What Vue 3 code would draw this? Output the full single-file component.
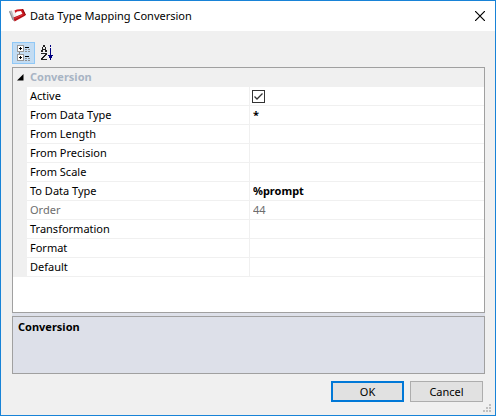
<script setup>
import { ref, reactive } from 'vue'

const expanded = ref(true)
const sortMode = ref('category')
const rows = reactive([
  { id: 'active', label: 'Active', type: 'check', value: true },
  { id: 'from-type', label: 'From Data Type', value: '*', changed: true },
  { id: 'from-length', label: 'From Length', value: '' },
  { id: 'from-precision', label: 'From Precision', value: '' },
  { id: 'from-scale', label: 'From Scale', value: '' },
  { id: 'to-type', label: 'To Data Type', value: '%prompt', changed: true },
  { id: 'order', label: 'Order', value: '44', readonly: true },
  { id: 'transformation', label: 'Transformation', value: '' },
  { id: 'format', label: 'Format', value: '' },
  { id: 'default', label: 'Default', value: '' }
])
</script>

<template>
  <main class="dialog">
    <header class="titlebar">
      <svg class="logo" width="18" height="16" viewBox="0 0 18 16" aria-hidden="true">
        <path d="M0 3L3 2.500L6 9L5 13L3 11.500Z" fill="#bcbcbf" />
        <path d="M0.500 3.500L4.500 12.500" stroke="#8c8c91" stroke-width="1" />
        <path d="M3 3L5.500 2L8 8.500L5.500 11Z" fill="#f4eeee" />
        <path d="M4.500 9.500L15.500 5L16.500 7.500L5.500 13.500Z" fill="#b80f16" />
        <path d="M5.500 10.500L15.500 6" stroke="#dd3c42" stroke-width="1" />
        <path d="M5.500 2.500L8 1.500L14 1L16.500 6.500L14 7L12 3L8 3.500L6.500 5Z" fill="#c9151d" />
        <path d="M13.500 1L16.500 7" stroke="#85090e" stroke-width="1" />
      </svg>
      <h1 class="title">Data Type Mapping Conversion</h1>
      <button class="close" type="button" aria-label="Close">
        <svg width="10" height="10" viewBox="0 0 10 10"><path d="M0 0L10 10M10 0L0 10" stroke="#000" stroke-width="1.200" /></svg>
      </button>
    </header>

    <div class="body">
      <div class="toolbar">
        <button class="tool" :class="{ on: sortMode === 'category' }" type="button" aria-label="Categorized" @click="sortMode = 'category'">
          <svg width="16" height="16" viewBox="0 0 16 16" shape-rendering="crispEdges">
            <path d="M3 7H4V9H3Z" fill="#808080" />
            <path d="M1 0H8V7H1ZM1 9H8V16H1Z" fill="#999" />
            <path d="M2 1H7V6H2ZM2 10H7V15H2Z" fill="#fff" />
            <path d="M3 3H6V4H3ZM4 2H5V5H4ZM3 12H6V13H3ZM4 11H5V14H4Z" fill="#000" />
            <path d="M9 2H13V3H9ZM9 11H13V12H9Z" fill="#000" />
            <path d="M9 4.500H15M9 6.500H15M9 13.500H15M9 15.500H15" stroke="#909090" stroke-dasharray="2 1" />
          </svg>
        </button>
        <button class="tool" :class="{ on: sortMode === 'alpha' }" type="button" aria-label="Alphabetical" @click="sortMode = 'alpha'">
          <svg width="16" height="16" viewBox="0 0 16 16" shape-rendering="crispEdges">
            <path d="M4 0H6V2H7V5H8V7H6V5H4V7H2V5H3V2H4ZM4 2V4H6V2Z" fill="#222" fill-rule="evenodd" />
            <path d="M2 8H8V10H7V11H6V12H5V13H4V14H8V15H2V13H3V12H4V11H5V10H6V9H2Z" fill="#222" />
            <path d="M11 0H12V2H11ZM11 3H12V10H14V11H13V13H12V15H11V13H10V11H9V10H11Z" fill="#000080" />
          </svg>
        </button>
      </div>

      <section class="grid">
        <table>
          <colgroup><col class="gutter-col"><col class="name-col"><col></colgroup>
          <thead>
            <tr>
              <th class="category" colspan="3">
                <button class="expander" type="button" :aria-expanded="expanded" @click="expanded = !expanded">
                  <svg width="7" height="7" viewBox="0 0 7 7"><path d="M6.500 0V6.500H0Z" fill="#000" /></svg>
                  <span>Conversion</span>
                </button>
              </th>
            </tr>
          </thead>
          <tbody v-if="expanded">
            <tr v-for="row in rows" :key="row.id" :class="{ dim: row.readonly, changed: row.changed }">
              <td class="gutter"></td>
              <th class="name" scope="row"><label :for="row.id">{{ row.label }}</label></th>
              <td class="value">
                <span v-if="row.type === 'check'" class="check">
                  <input :id="row.id" v-model="row.value" type="checkbox">
                  <svg v-if="row.value" width="13" height="13" viewBox="0 0 13 13" aria-hidden="true"><path d="M2.500 6.500L5 9L10.500 3.500" fill="none" stroke="#333" stroke-width="1.300" /></svg>
                </span>
                <input v-else :id="row.id" v-model="row.value" class="text" type="text" :readonly="row.readonly">
              </td>
            </tr>
          </tbody>
        </table>
      </section>

      <section class="help"><h2>Conversion</h2></section>

      <footer class="actions">
        <button class="btn primary" type="button">OK</button>
        <button class="btn" type="button">Cancel</button>
      </footer>
    </div>

    <svg class="grip" width="8" height="8" viewBox="0 0 8 8" aria-hidden="true">
      <path d="M6 0H8V2H6ZM3 3H5V5H3ZM6 3H8V5H6ZM0 6H2V8H0ZM3 6H5V8H3ZM6 6H8V8H6Z" fill="#bfbfbf" />
    </svg>
  </main>
</template>

<style>
body { margin: 0; }
</style>

<style scoped>
* { box-sizing: border-box; }
button, input { font: inherit; color: inherit; }
.dialog {
  position: relative;
  display: flex;
  flex-direction: column;
  min-height: 100vh;
  border: 1px solid #1883d7;
  background: #f0f0f0;
  color: #000;
  font: 11px/18px "Noto Sans", "Open Sans", sans-serif;
}
.titlebar {
  display: flex;
  align-items: center;
  height: 30px;
  padding: 0 10px 0 8px;
  background: #fff;
}
.logo { margin-right: 3px; }
.title { flex: 1; margin: 0; font-size: 11px; font-weight: 400; }
.close { display: flex; padding: 0; border: 0; background: none; }
.body {
  flex: 1;
  display: flex;
  flex-direction: column;
  padding: 11px 10px 13px 11px;
}
.toolbar { display: flex; margin-bottom: 3px; }
.tool {
  display: flex;
  align-items: center;
  justify-content: center;
  width: 23px;
  height: 22px;
  padding: 0;
  border: 1px solid transparent;
  background: none;
}
.tool.on { border-color: #90c8f6; background: #c2dcf3; }
.grid { flex: 1; border: 1px solid #a0a0a0; background: #fff; }
table { width: 100%; table-layout: fixed; border-collapse: separate; border-spacing: 0; }
.gutter-col { width: 14px; }
.name-col { width: 223px; }
th, td { height: 19px; padding: 0; text-align: left; font-weight: 400; }
.category { background: #f0f0f0; color: #a8b4c4; }
.expander {
  display: flex;
  align-items: center;
  gap: 6px;
  width: 100%;
  height: 19px;
  padding: 0 0 1px 4px;
  border: 0;
  background: none;
  font-weight: 700;
}
.gutter { background: #f0f0f0; }
.name { padding-left: 3px; border-right: 1px solid #f0f0f0; border-bottom: 1px solid #f0f0f0; }
.name label { display: block; }
.value { padding-left: 2px; border-bottom: 1px solid #f0f0f0; }
.text {
  display: block;
  width: 100%;
  height: 18px;
  padding: 0 0 0 1px;
  border: 0;
  outline: 0;
  background: none;
}
.changed .text { font-weight: 700; }
.dim { color: #6d6d6d; }
.check { position: relative; display: block; width: 13px; height: 13px; }
.check input {
  display: block;
  width: 13px;
  height: 13px;
  margin: 0;
  appearance: none;
  border: 1px solid #333;
  background: #fff;
}
.check svg { position: absolute; inset: 0; pointer-events: none; }
.help {
  min-height: 58px;
  margin-top: 3px;
  padding: 1px 5px;
  border: 1px solid #a0a0a0;
  background: #dde0e9;
  box-shadow: 0 -3px #dde0e9;
}
.help h2 { margin: 0; font-size: 11px; font-weight: 700; }
.actions { display: flex; justify-content: flex-end; gap: 6px; margin-top: 7px; padding-right: 2px; }
.btn { width: 73px; height: 21px; padding: 0; border: 1px solid #adadad; background: #e1e1e1; line-height: 18px; }
.primary { border: 2px solid #0078d7; line-height: 16px; }
.grip { position: absolute; right: 4px; bottom: 3px; }
</style>
